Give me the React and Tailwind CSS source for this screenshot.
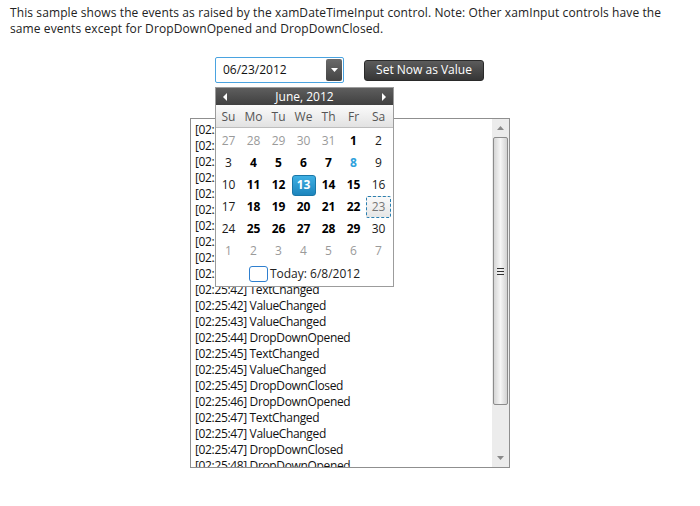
import React from 'react';

const weeks = [
  [[27, 'o'], [28, 'o'], [29, 'o'], [30, 'o'], [31, 'o'], [1, 'b'], [2, 'n']],
  [[3, 'n'], [4, 'b'], [5, 'b'], [6, 'b'], [7, 'b'], [8, 't'], [9, 'n']],
  [[10, 'n'], [11, 'b'], [12, 'b'], [13, 's'], [14, 'b'], [15, 'b'], [16, 'n']],
  [[17, 'n'], [18, 'b'], [19, 'b'], [20, 'b'], [21, 'b'], [22, 'b'], [23, 'f']],
  [[24, 'n'], [25, 'b'], [26, 'b'], [27, 'b'], [28, 'b'], [29, 'b'], [30, 'n']],
  [[1, 'o'], [2, 'o'], [3, 'o'], [4, 'o'], [5, 'o'], [6, 'o'], [7, 'o']],
];

const log = [
  '[02:25:31] DropDownOpened',
  '[02:25:32] TextChanged',
  '[02:25:32] ValueChanged',
  '[02:25:32] DropDownClosed',
  '[02:25:36] DropDownOpened',
  '[02:25:37] TextChanged',
  '[02:25:37] ValueChanged',
  '[02:25:37] DropDownClosed',
  '[02:25:41] DropDownOpened',
  '[02:25:41] DropDownClosed',
  '[02:25:42] TextChanged',
  '[02:25:42] ValueChanged',
  '[02:25:43] ValueChanged',
  '[02:25:44] DropDownOpened',
  '[02:25:45] TextChanged',
  '[02:25:45] ValueChanged',
  '[02:25:45] DropDownClosed',
  '[02:25:46] DropDownOpened',
  '[02:25:47] TextChanged',
  '[02:25:47] ValueChanged',
  '[02:25:47] DropDownClosed',
  '[02:25:48] DropDownOpened',
];

function DayCell({ day, kind }) {
  if (kind === 's') {
    return (
      <div className="flex h-[22px] w-[25px] items-center justify-center">
        <div className="flex h-[21px] w-[24px] items-center justify-center rounded-[3px] border border-[#1a77a8] bg-gradient-to-b from-[#3fb0e4] to-[#1c85bd] font-bold text-white">
          {day}
        </div>
      </div>
    );
  }
  if (kind === 'f') {
    return (
      <div className="flex h-[22px] w-[25px] items-center justify-center">
        <div className="flex h-[22px] w-[25px] items-center justify-center rounded-[2px] border border-dashed border-[#2a7fb0] bg-gradient-to-b from-[#fafafa] to-[#e6e6e6] text-[#777]">
          {day}
        </div>
      </div>
    );
  }
  const cls = {
    o: 'text-[#9a9a9a]',
    n: 'text-[#1a1a1a]',
    b: 'font-bold text-black',
    t: 'font-bold text-[#2fa2dc]',
  }[kind];
  return <div className={'flex h-[22px] w-[25px] items-center justify-center ' + cls}>{day}</div>;
}

function Calendar() {
  return (
    <div className="absolute left-0 top-[30px] z-10 w-[179px] border border-[#9c9c9c] bg-white text-[12px]">
      <div className="flex h-[17px] items-center justify-between bg-gradient-to-b from-[#5e5e5e] to-[#404040] px-[7px] text-white">
        <svg width="5" height="8" viewBox="0 0 5 8"><path d="M4 0 L0 4 L4 8 Z" fill="#fff" /></svg>
        <span className="leading-none">June, 2012</span>
        <svg width="5" height="8" viewBox="0 0 5 8"><path d="M1 0 L5 4 L1 8 Z" fill="#fff" /></svg>
      </div>
      <div className="flex h-[23px] border-b border-[#bdbdbd] bg-gradient-to-b from-[#fbfbfb] to-[#e2e2e2] pt-[2px] text-[#555]">
        {['Su', 'Mo', 'Tu', 'We', 'Th', 'Fr', 'Sa'].map((d) => (
          <div key={d} className="flex w-[25px] items-center justify-center">{d}</div>
        ))}
      </div>
      <div className="pt-[2px]">
        {weeks.map((w, i) => (
          <div key={i} className="flex">
            {w.map(([d, k], j) => (
              <DayCell key={j} day={d} kind={k} />
            ))}
          </div>
        ))}
      </div>
      <div className="flex h-[24px] items-center justify-center gap-[2px] pb-[1px] text-[#222]">
        <div className="h-[16px] w-[19px] rounded-[3px] border border-[#2f7fcf] bg-white" />
        <span>Today: 6/8/2012</span>
      </div>
    </div>
  );
}

function ScrollBar() {
  return (
    <div className="flex w-[17px] flex-col bg-[#ececec]">
      <div className="flex h-[18px] items-center justify-center">
        <svg width="7" height="4" viewBox="0 0 7 4"><path d="M0 4 L3.5 0 L7 4 Z" fill="#8a8a8a" /></svg>
      </div>
      <div className="mx-[1px] flex h-[268px] items-center justify-center rounded-[2px] border border-[#8c8c8c] bg-gradient-to-r from-[#d6d6d6] via-[#f6f6f6] to-[#d2d2d2]">
        <div className="flex flex-col gap-[2px]">
          <div className="h-[1px] w-[7px] bg-[#333]" />
          <div className="h-[1px] w-[7px] bg-[#333]" />
          <div className="h-[1px] w-[7px] bg-[#333]" />
        </div>
      </div>
      <div className="flex-1" />
      <div className="flex h-[18px] items-center justify-center">
        <svg width="7" height="4" viewBox="0 0 7 4"><path d="M0 0 L3.5 4 L7 0 Z" fill="#8a8a8a" /></svg>
      </div>
    </div>
  );
}

export default function App() {
  return (
    <div className="h-[506px] w-[700px] bg-white font-['Open_Sans',sans-serif] text-[12px] text-[#222]">
      <p className="px-[10px] pt-[5px] leading-[16px] tracking-[0.1px]">
        This sample shows the events as raised by the xamDateTimeInput control. Note: Other xamInput controls have the
        <br />
        same events except for DropDownOpened and DropDownClosed.
      </p>
      <div className="mt-[20px] flex flex-col items-center">
        <div className="relative ml-[-1px] flex items-center gap-[20px]">
          <div className="flex h-[26px] w-[129px] items-center justify-between rounded-[2px] border border-[#4aa3e0] bg-white pl-[7px] pr-[1px]">
            <span className="text-[#111]">06/23/2012</span>
            <div className="flex h-[22px] w-[16px] items-center justify-center rounded-[2px] bg-gradient-to-b from-[#6a6a6a] to-[#444]">
              <svg width="7" height="4" viewBox="0 0 7 4"><path d="M0 0 L3.5 4 L7 0 Z" fill="#fff" /></svg>
            </div>
          </div>
          <button className="flex h-[21px] w-[120px] items-center justify-center rounded-[3px] border border-[#2a2a2a] bg-gradient-to-b from-[#5c5c5c] to-[#363636] text-white">
            Set Now as Value
          </button>
          <Calendar />
        </div>
        <div className="mt-[35px] flex h-[350px] w-[320px] border border-[#8f8f8f] bg-white">
          <div className="flex-1 overflow-hidden pl-[4px] pt-[3px] leading-[16px] tracking-[-0.35px] text-[#111]">
            {log.map((l, i) => (
              <div key={i} className="whitespace-nowrap">{l}</div>
            ))}
          </div>
          <ScrollBar />
        </div>
      </div>
    </div>
  );
}
